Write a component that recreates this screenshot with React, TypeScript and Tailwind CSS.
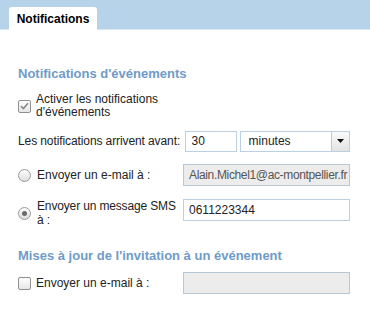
import { useState } from "react";

const font = { fontFamily: '"Liberation Sans", Arial, sans-serif' };

function CheckBox({ checked }: { checked: boolean }) {
  return (
    <span className="flex h-[13px] w-[13px] shrink-0 items-center justify-center rounded-[2px] border border-[#8f8f8f] bg-gradient-to-b from-[#fdfdfd] to-[#e6e6e6]">
      {checked && (
        <svg width="9" height="8" viewBox="0 0 9 8">
          <path d="M1 4.2 L3.4 6.5 L8 1.2" fill="none" stroke="#8a8a8a" strokeWidth="1.6" />
        </svg>
      )}
    </span>
  );
}

function Radio({ checked }: { checked: boolean }) {
  return (
    <span className="flex h-[13px] w-[13px] shrink-0 items-center justify-center rounded-full border border-[#9a9a9a] bg-gradient-to-b from-[#fdfdfd] to-[#dedede]">
      {checked && <span className="h-[5px] w-[5px] rounded-full bg-[#6b6b6b]" />}
    </span>
  );
}

export default function App() {
  const [delay, setDelay] = useState("30");
  const [sms, setSms] = useState("0611223344");

  return (
    <div className="h-[309px] w-[370px] overflow-hidden bg-white text-[12px] text-[#222]" style={font}>
      {/* Barre d'onglets */}
      <div className="flex h-[30px] border-b border-[#d6e6f3] bg-[#b6d3ea] pl-[9px] pt-[7px]">
        <div className="flex h-[23px] w-[88px] items-center justify-center rounded-t-[3px] bg-white text-[12px] font-bold text-black">
          Notifications
        </div>
      </div>

      <div className="pl-[18px] pr-[20px]">
        <h2 className="mt-[36px] text-[13px] font-bold leading-[15px] text-[#6f9bc8]">
          Notifications d'événements
        </h2>

        <div className="mt-[12px] flex items-center">
          <CheckBox checked />
          <span className="ml-[5px] w-[140px] leading-[13px]">Activer les notifications d'événements</span>
        </div>

        <div className="mt-[11px] flex h-[22px] items-center">
          <span className="w-[169px] tracking-[-0.1px]">Les notifications arrivent avant:</span>
          <input
            value={delay}
            onChange={(e) => setDelay(e.target.value)}
            className="h-[21px] w-[52px] border border-[#bcd0e4] px-[6px] text-[12px] text-[#222] outline-none"
          />
          <div className="ml-[3px] flex h-[21px] w-[112px] items-center border border-[#bcd0e4]">
            <span className="flex-1 pl-[8px]">minutes</span>
            <span className="flex h-full w-[18px] items-center justify-center border-l border-[#c7c7c7] bg-gradient-to-b from-[#fafafa] to-[#e3e3e3]">
              <svg width="7" height="4" viewBox="0 0 7 4">
                <path d="M0 0 H7 L3.5 4 Z" fill="#111" />
              </svg>
            </span>
          </div>
        </div>

        <div className="mt-[12px] flex h-[22px] items-center">
          <div className="flex w-[165px] items-center">
            <Radio checked={false} />
            <span className="ml-[6px]">Envoyer un e-mail à :</span>
          </div>
          <div className="flex h-[22px] flex-1 items-center overflow-hidden whitespace-nowrap border border-[#b8c7d6] bg-[#ececec] pl-[5px] tracking-[-0.35px] text-[#555]">
            Alain.Michel1@ac-montpellier.fr
          </div>
        </div>

        <div className="mt-[13px] flex items-start">
          <div className="flex w-[165px] items-center">
            <Radio checked />
            <span className="ml-[6px] w-[144px] leading-[14px] tracking-[-0.15px]">Envoyer un message SMS à :</span>
          </div>
          <input
            value={sms}
            onChange={(e) => setSms(e.target.value)}
            className="h-[22px] flex-1 border border-[#bcd0e4] px-[5px] text-[12px] text-[#222] outline-none"
          />
        </div>

        <h2 className="mt-[21px] text-[13px] font-bold leading-[15px] text-[#6f9bc8]">
          Mises à jour de l'invitation à un événement
        </h2>

        <div className="mt-[9px] flex h-[22px] items-center">
          <div className="flex w-[165px] items-center">
            <CheckBox checked={false} />
            <span className="ml-[5px]">Envoyer un e-mail à :</span>
          </div>
          <div className="h-[22px] flex-1 border border-[#b8c7d6] bg-[#ececec]" />
        </div>
      </div>
    </div>
  );
}
